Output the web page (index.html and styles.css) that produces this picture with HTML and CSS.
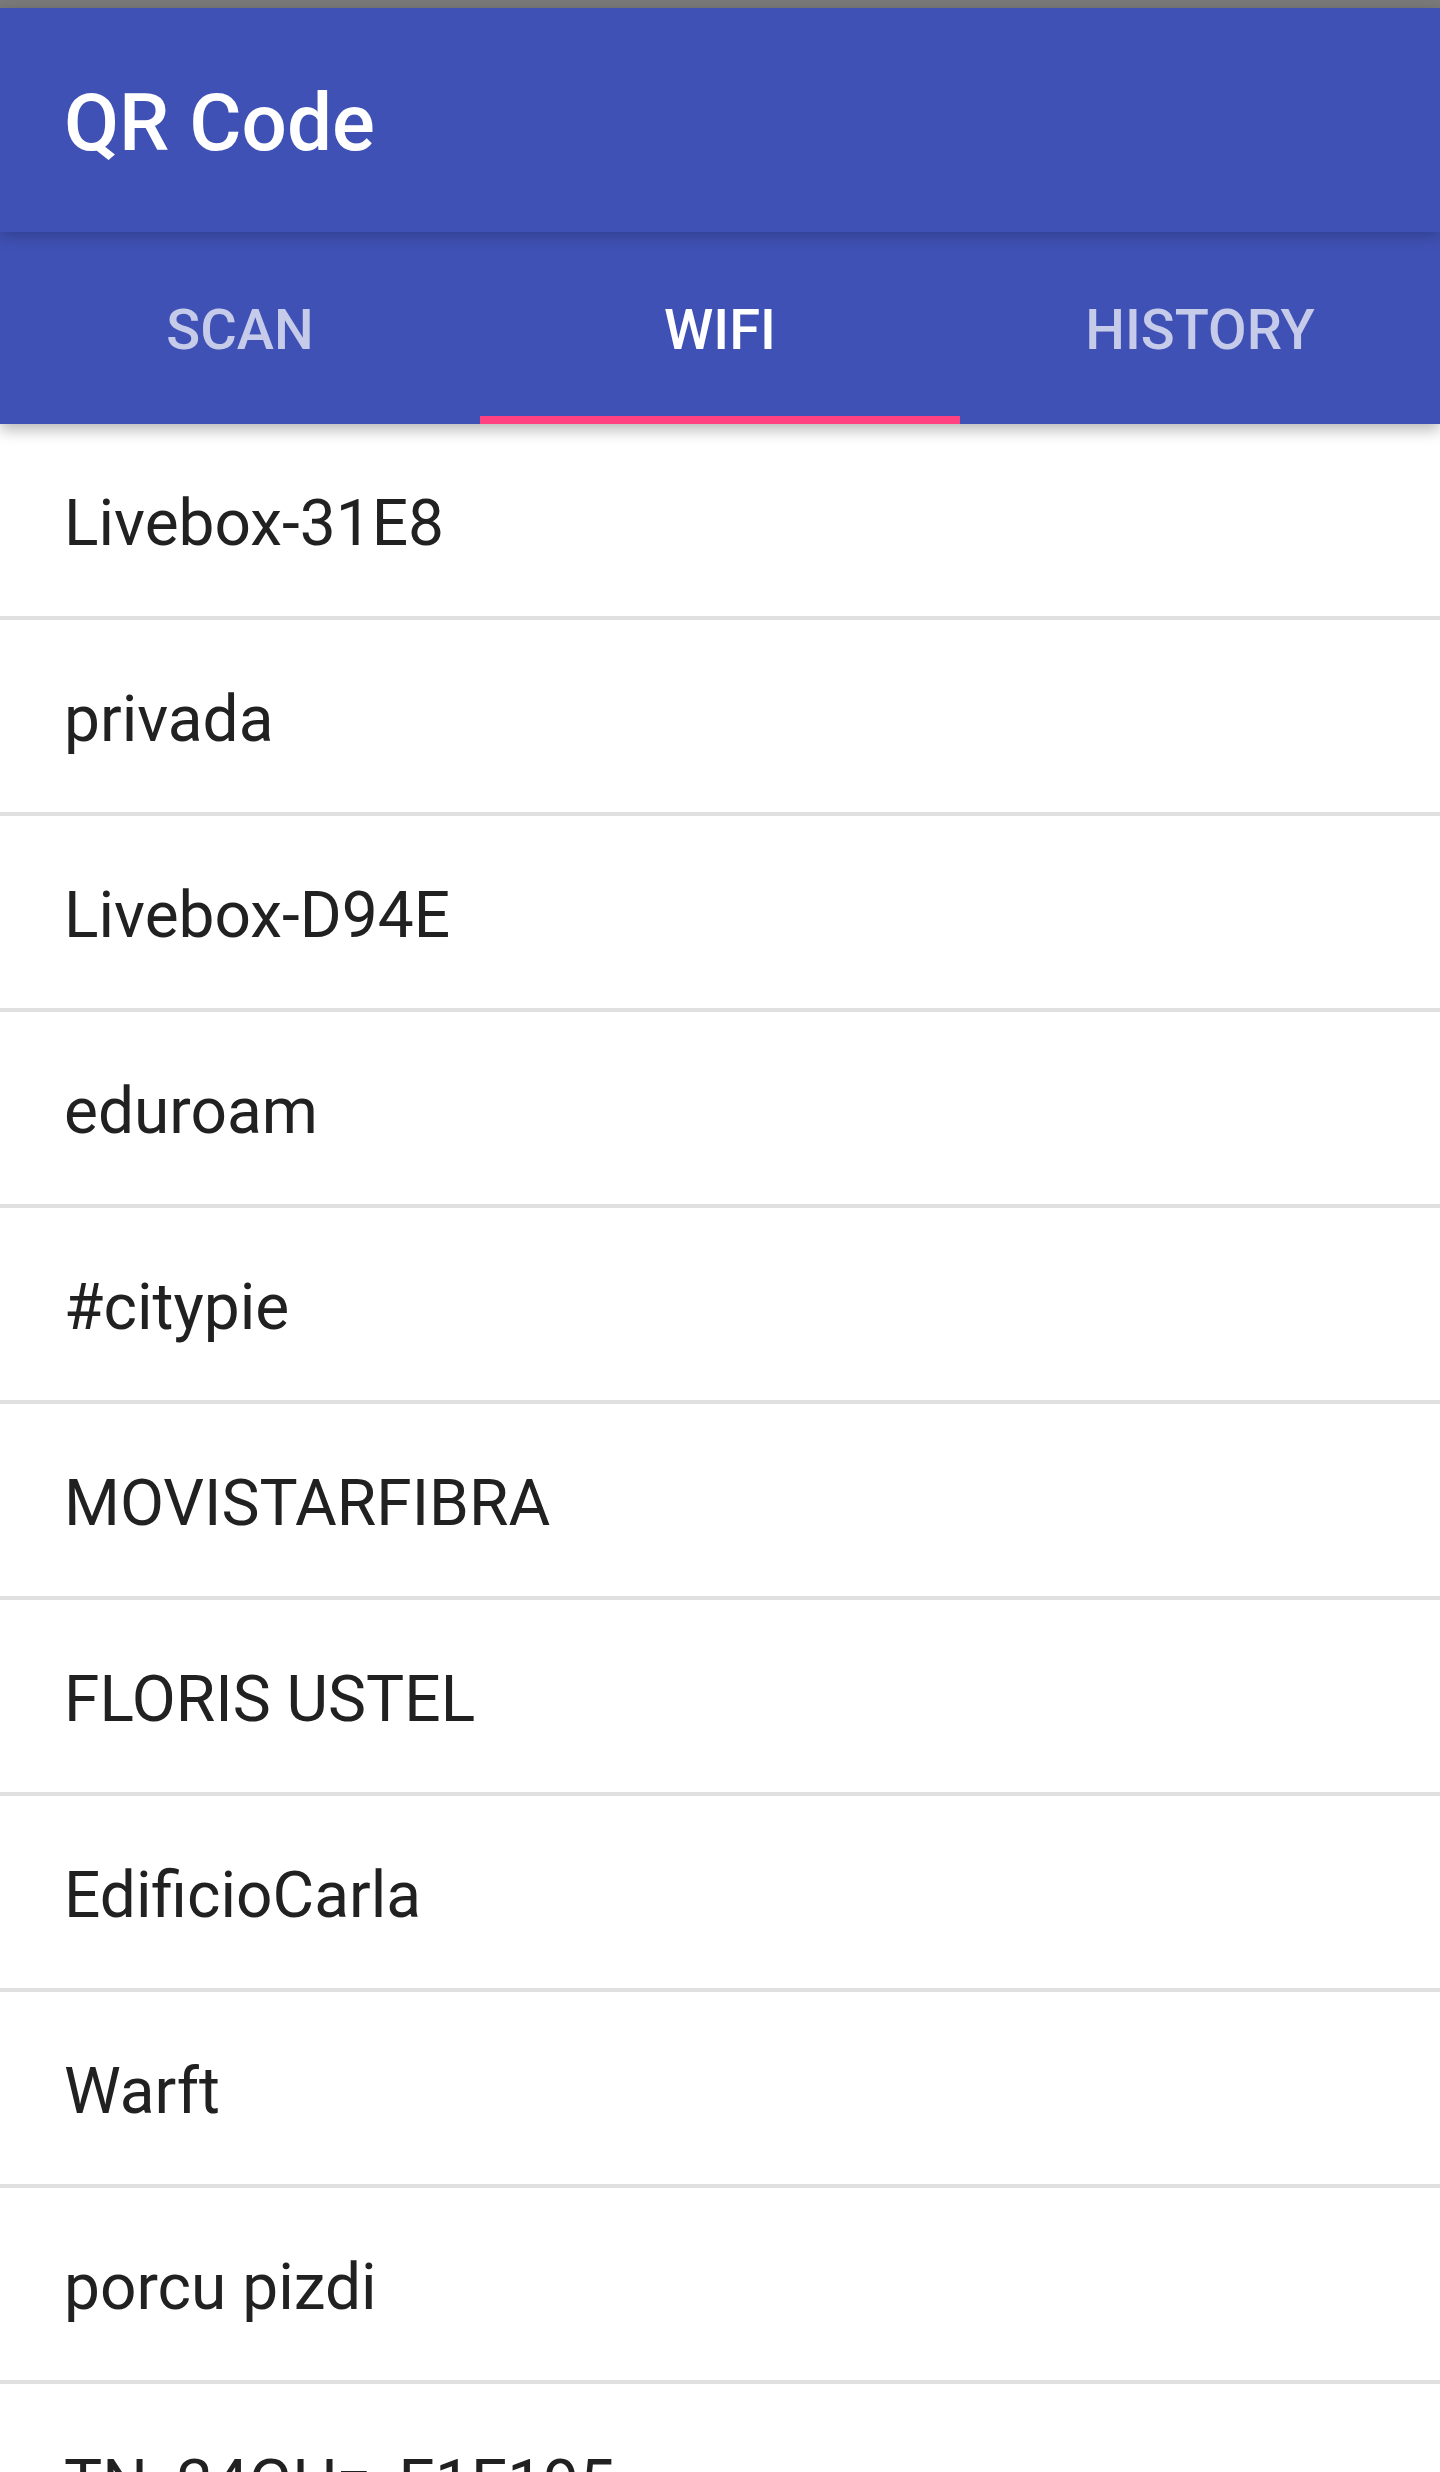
FILE: index.html
```html
<!DOCTYPE html>
<html>
<head>
<meta charset="utf-8">
<title>QR Code</title>
<link rel="stylesheet" href="styles.css">
</head>
<body>
<div class="screen">
  <div class="status-bar"></div>
  <header class="app-bar">
    <h1 class="app-title">QR Code</h1>
  </header>
  <nav class="tabs">
    <div class="tab">SCAN</div>
    <div class="tab tab-active">WIFI</div>
    <div class="tab">HISTORY</div>
  </nav>
  <ul class="wifi-list">
    <li class="wifi-item">Livebox-31E8</li>
    <li class="wifi-item">privada</li>
    <li class="wifi-item">Livebox-D94E</li>
    <li class="wifi-item">eduroam</li>
    <li class="wifi-item">#citypie</li>
    <li class="wifi-item">MOVISTARFIBRA</li>
    <li class="wifi-item">FLORIS USTEL</li>
    <li class="wifi-item">EdificioCarla</li>
    <li class="wifi-item">Warft</li>
    <li class="wifi-item">porcu pizdi</li>
    <li class="wifi-item">TN_24GHz_E1E195</li>
  </ul>
</div>
</body>
</html>
```
FILE: styles.css
```css
html, body {
  margin: 0;
  padding: 0;
  background: #ffffff;
}

.screen {
  width: 1440px;
  height: 2472px;
  overflow: hidden;
  display: flex;
  flex-direction: column;
  font-family: Roboto, "Noto Sans", "Liberation Sans", sans-serif;
}

.status-bar {
  height: 8px;
  flex: none;
  background: #7a7a7a;
}

.app-bar {
  height: 224px;
  flex: none;
  box-sizing: border-box;
  padding: 7px 64px 0;
  display: flex;
  align-items: center;
  background: #3f51b5;
  position: relative;
  z-index: 3;
  box-shadow: 0 4px 14px rgba(0, 0, 0, 0.22);
}

.app-title {
  margin: 0;
  font-size: 80px;
  font-weight: 500;
  color: #ffffff;
  line-height: 1.171;
}

.tabs {
  height: 192px;
  flex: none;
  display: grid;
  grid-template-columns: repeat(3, 1fr);
  background: #3f51b5;
  position: relative;
  z-index: 2;
  box-shadow: 0 6px 14px rgba(0, 0, 0, 0.28);
}

.tab {
  box-sizing: border-box;
  padding-top: 14px;
  display: flex;
  align-items: center;
  justify-content: center;
  font-size: 56px;
  font-weight: 500;
  line-height: 1.171;
  color: rgba(255, 255, 255, 0.7);
  border-bottom: 8px solid transparent;
}

.tab-active {
  color: #ffffff;
  border-bottom-color: #ff4081;
}

.wifi-list {
  list-style: none;
  margin: 0;
  padding: 0;
  position: relative;
  z-index: 1;
}

.wifi-item {
  height: 196px;
  box-sizing: border-box;
  padding: 12px 64px 4px;
  display: flex;
  align-items: center;
  font-size: 64px;
  line-height: 1.171;
  color: #212121;
  border-bottom: 4px solid #e0e0e0;
}
```
